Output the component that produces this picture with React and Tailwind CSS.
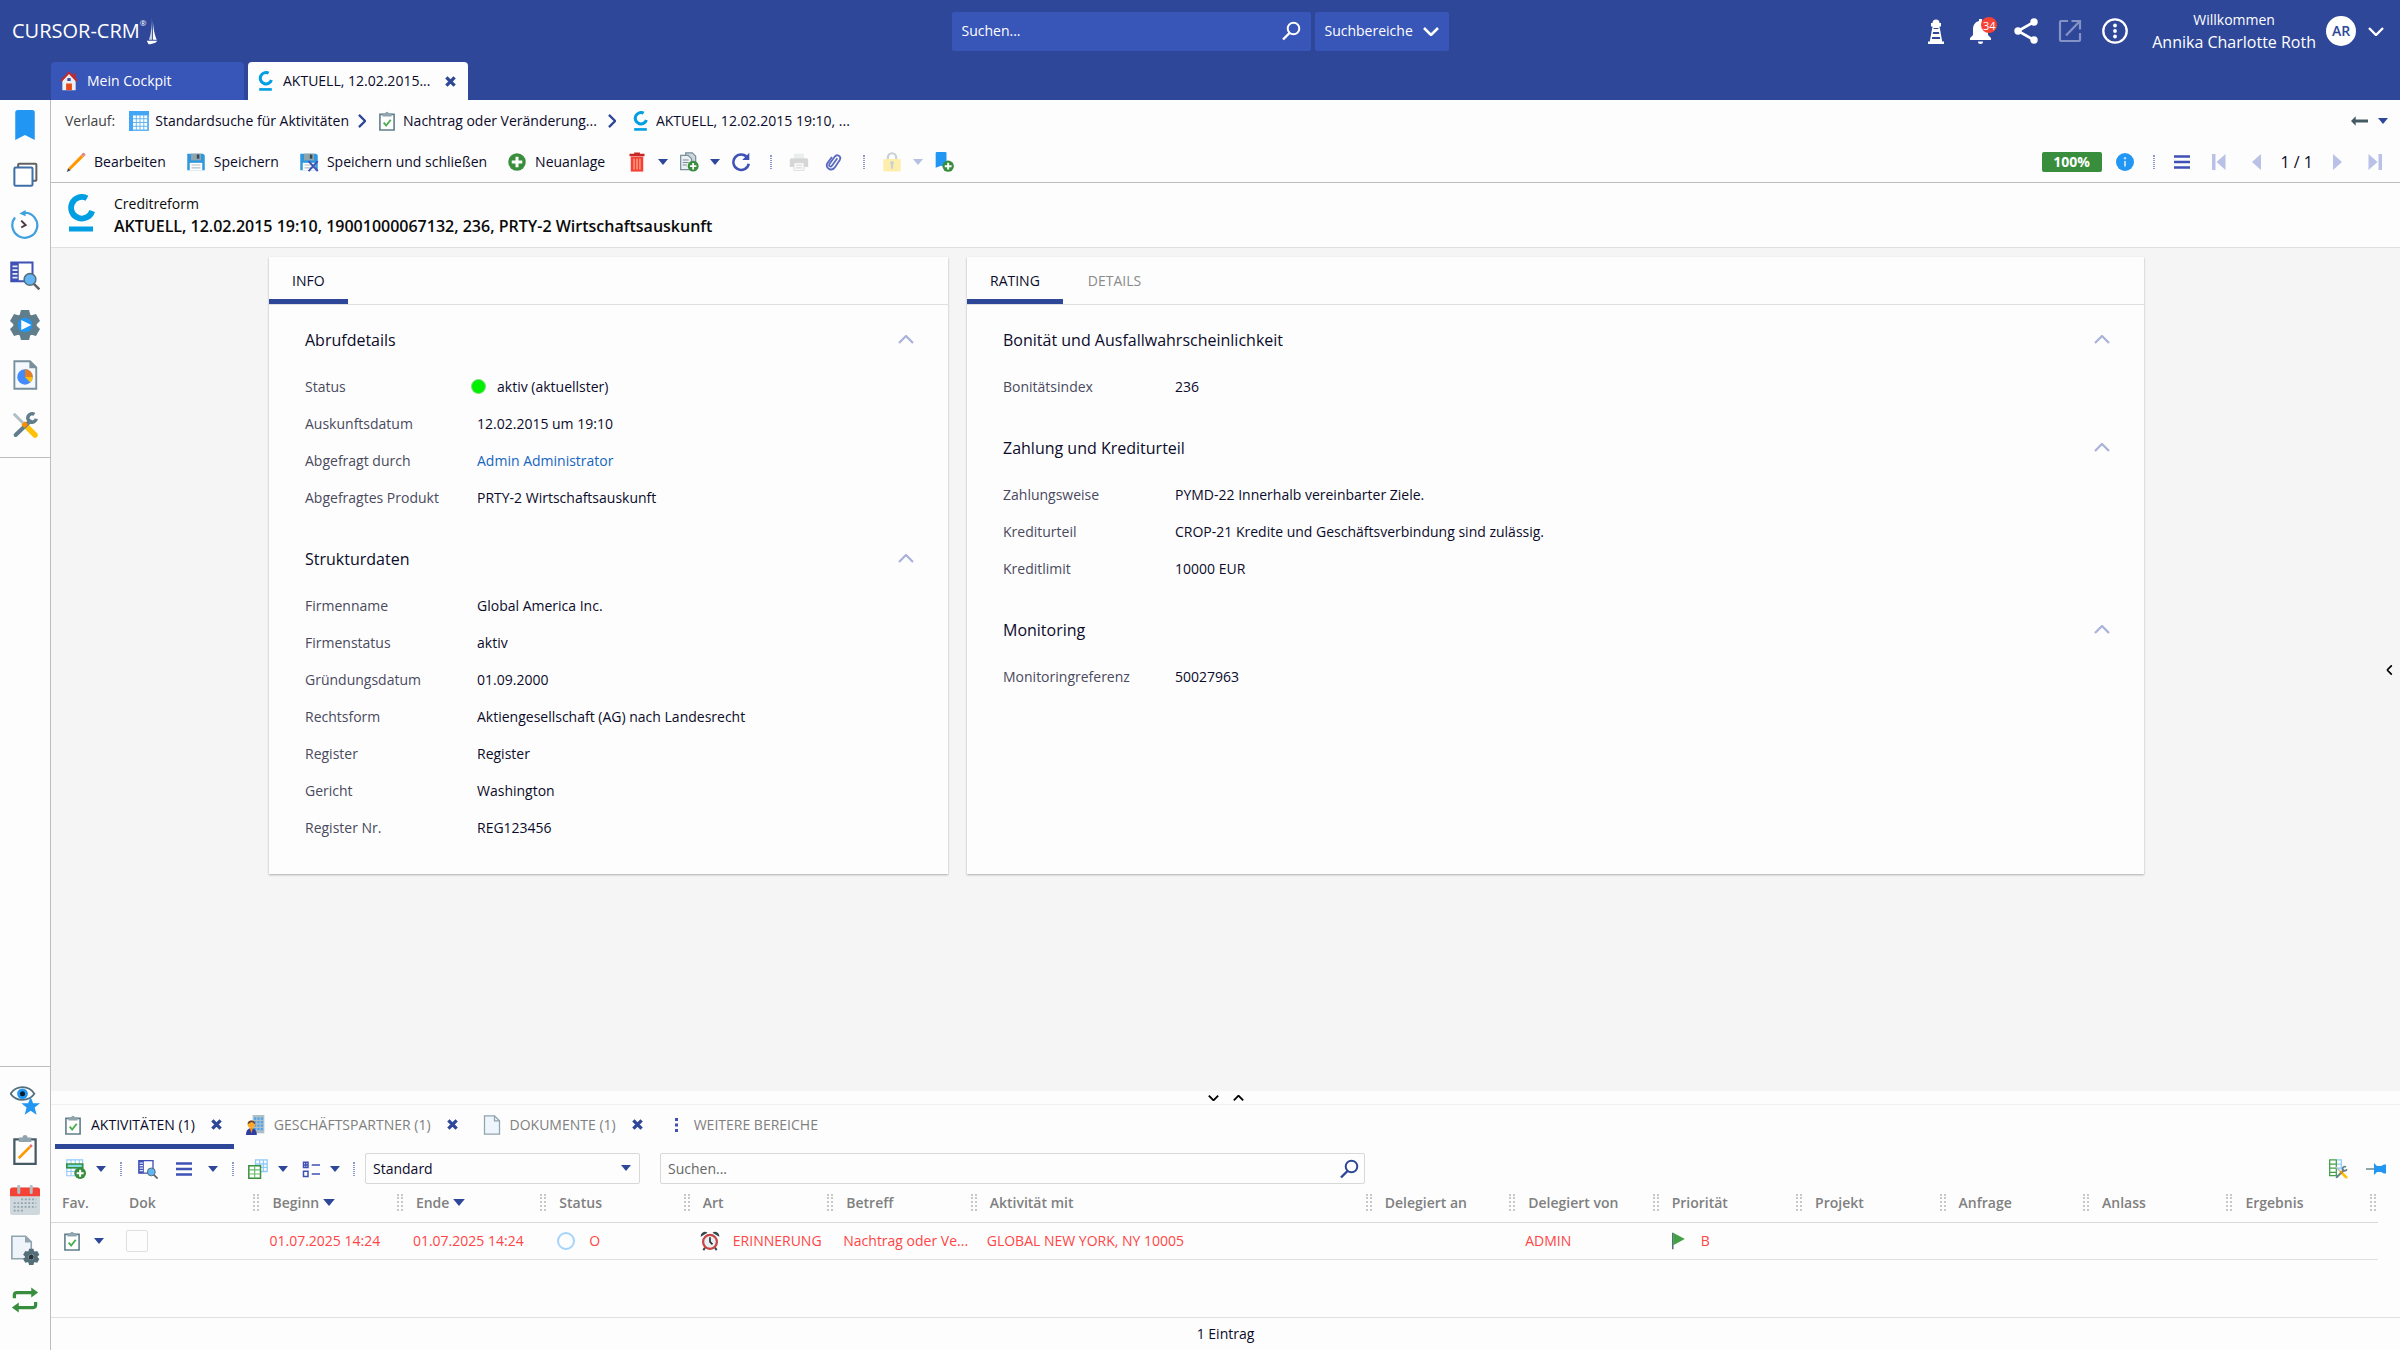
import React from "react";

const Svg = ({ children, className = "size-5", box = "0 0 24 24" }) => (
    <svg viewBox={box} className={`shrink-0 ${className}`} fill="none" aria-hidden="true">
        {children}
    </svg>
);

/* ---------- shared icons ---------- */

const Caret = ({ className = "h-[6px] w-[10px] text-[#2e4799]" }) => (
    <Svg box="0 0 10 6" className={className}>
        <path d="M0 0h10L5 6z" fill="currentColor" />
    </Svg>
);

const Chevron = ({ className, width = 2, d = "M1 1l7 7 7-7" }) => (
    <Svg box="0 0 16 9" className={className}>
        <path d={d} stroke="currentColor" strokeWidth={width} />
    </Svg>
);

const Up = "M1 8l7-7 7 7";

const CrossIcon = () => (
    <Svg box="0 0 12 12" className="size-[11px] text-[#2e4799]">
        <path d="M1.5 1.5l9 9M10.5 1.5l-9 9" stroke="currentColor" strokeWidth="3.6" />
    </Svg>
);

const CreditIcon = ({ className }) => (
    <Svg box="0 0 28 38" className={className}>
        <path d="M20 4.2A10.800 10.800 0 1 0 25.200 17" stroke="#009fe3" strokeWidth="5.800" />
        <path d="M2 32.500h24v5H2z" fill="#009fe3" />
    </Svg>
);

const Lens = ({ className }) => (
    <Svg box="0 0 20 20" className={className}>
        <circle cx="12.5" cy="7.5" r="5.8" stroke="currentColor" strokeWidth="2" />
        <path d="M8.5 12L2 18.5" stroke="currentColor" strokeWidth="2.4" />
    </Svg>
);

const ClipboardCheck = ({ className }) => (
    <Svg className={className}>
        <path d="M3.500 4h17v18.800h-17z" fill="#fff" stroke="#607d8b" strokeWidth="1.900" />
        <path d="M6.500 2.800h3.500a2 2 0 0 1 4 0h3.500v3.800h-11z" fill="#90a4ae" />
        <path d="M8 14l3 3.500 5.500-7" stroke="#4caf50" strokeWidth="2.300" />
    </Svg>
);

const TableSearch = ({ className }) => (
    <Svg className={className}>
        <path d="M1 2h17v15H1z" fill="#fff" stroke="#3f51b5" strokeWidth="1.6" />
        <path d="M1 2h6v15H1z" fill="#3f51b5" />
        <path d="M2 5h4M2 8h4M2 11h4M2 14h4" stroke="#e8eaf6" strokeWidth="1.4" />
        <path d="M18.5 18.5l5 5" stroke="#616161" strokeWidth="2" />
        <circle cx="16" cy="15.5" r="4.7" fill="#64b5f6" stroke="#546e7a" strokeWidth="1.2" />
    </Svg>
);

const Plus = ({ x, y, r }) => (
    <g>
        <circle cx={x} cy={y} r={r} fill="#388e3c" />
        <path d={`M${x - r * 0.6} ${y}h${r * 1.2}M${x} ${y - r * 0.6}v${r * 1.2}`} stroke="#fff" strokeWidth={r * 0.34} />
    </g>
);

const Lines = () => (
    <Svg box="0 0 16 14" className="h-[14px] w-4">
        <path d="M0 1.5h16M0 7h16M0 12.5h16" stroke="#3f51b5" strokeWidth="2.6" />
    </Svg>
);

const Wrench = () => (
    <g>
        <path d="M3 3l9 9" stroke="#b0bec5" strokeWidth="2.4" />
        <path d="M12 12l8 8" stroke="#ffc107" strokeWidth="4.4" strokeLinecap="round" />
        <path d="M4.5 20L16 9" stroke="#607d8b" strokeWidth="3.2" strokeLinecap="round" />
        <path d="M19.500 3.500a3.400 3.400 0 1 0 1.500 3.500" stroke="#607d8b" strokeWidth="2.800" />
        <path d="M10.5 10.5l2.5 2.5" stroke="#fb8c00" strokeWidth="4" />
    </g>
);

const Floppy = ({ x }) => (
    <Svg>
        <path d="M1.5 2h19l2 2v18h-21z" fill="#2f97dd" />
        <path d="M6 2h12v8H6z" fill="#90a4ae" />
        <path d="M13 3h3v5h-3z" fill="#37474f" />
        <path d="M4.5 13h15v9h-15z" fill="#fff" />
        <path d="M6.5 15.5h11M6.5 19h11" stroke="#b0bec5" strokeWidth="1.3" />
        {x && <path d="M11.5 11l11 12M22.5 11l-11 12" stroke="#3f51b5" strokeWidth="2.4" />}
    </Svg>
);

const Gear = ({ cx, cy, r, color, children }) => (
    <g transform={`translate(${cx} ${cy})`}>
        <circle r={r * 0.55} stroke={color} strokeWidth={r * 0.45} />
        {[0, 60, 120, 180, 240, 300].map((a) => (
            <path key={a} d={`M${-r * 0.27} ${-r}h${r * 0.54}l${r * 0.1} ${r * 0.4}h${-r * 0.74}z`} fill={color} transform={`rotate(${a})`} />
        ))}
        {children}
    </g>
);

const IconButton = ({ label, children, disabled }) => (
    <button type="button" aria-label={label} disabled={disabled} className="flex shrink-0 items-center justify-center">
        {children}
    </button>
);

const Sep = () => <span className="h-[14px] w-[2px] shrink-0 border-x border-dotted border-[#8c98cc]" />;

/* ---------- top bar ---------- */

const Header = () => (
    <header className="flex h-[100px] flex-col justify-between bg-[#2e4799] text-white">
        <div className="grid h-[62px] grid-cols-[1fr_auto_1fr] items-center">
            <div className="flex items-center pl-3">
                <span className="text-[20px] leading-6 font-medium">CURSOR-CRM</span>
                <span className="self-start text-[8px] leading-3">®</span>
                <Svg box="0 0 12 32" className="h-[28px] w-3">
                    <path d="M6 0v26H2.5C5 19 6 10 6 0z" fill="#fff" fillOpacity=".75" />
                    <path d="M7 4c.5 9 2 17 4.5 22H7z" fill="#fff" />
                    <path d="M0 27h12l-2 2.500-6 1.500H2z" fill="#fff" />
                </Svg>
            </div>
            <div className="flex h-[39px] gap-1">
                <div className="flex w-[359px] items-center rounded-xs bg-[#3855b8] px-2.5">
                    <input aria-label="Suchen" placeholder="Suchen..." className="min-w-0 flex-1 text-[14px] outline-none placeholder:text-white" />
                    <IconButton label="Suche starten">
                        <Lens className="size-5" />
                    </IconButton>
                </div>
                <button type="button" className="flex w-[134px] items-center justify-between rounded-xs bg-[#3855b8] px-2.5 text-[14px]">
                    Suchbereiche
                    <Chevron className="h-[9px] w-4" width={2.6} />
                </button>
            </div>
            <div className="flex items-center justify-end gap-5 pr-4">
                <span className="mr-1 flex">
                    <IconButton label="Leuchtturm">
                        <Svg box="0 0 16 25" className="h-[25px] w-4">
                            <path d="M4.5 4a3.5 3.5 0 0 1 7 0H13v3.500h-1.500V9h-7V7.500H3V4z" fill="#fff" />
                            <path d="M4.500 10h7l.5 3H4zM3.700 15h8.600l.5 3H3.200zM3 20h10l.6 2.500H16V25H0v-2.500h2.400z" fill="#fff" />
                            <path d="M5 9L2.500 23M11 9l2.500 14" stroke="#fff" strokeWidth="1.5" />
                        </Svg>
                    </IconButton>
                </span>
                <button type="button" aria-label="Benachrichtigungen" className="relative">
                    <Svg box="0 0 26 26" className="size-[26px]">
                        <path d="M11 1h3v2c4 1 6 4 6 8v6l3 3v2H2v-2l3-3v-6c0-4 2-7 6-8z" fill="#fff" />
                        <path d="M10 23.5h5a2.5 2.5 0 0 1-5 0z" fill="#fff" />
                    </Svg>
                    <span className="absolute -top-px -right-[3px] flex size-4 items-center justify-center rounded-full bg-[#f44336] text-[11px] leading-none">34</span>
                </button>
                <IconButton label="Teilen">
                    <Svg box="0 0 24 26" className="h-[26px] w-6">
                        <path d="M20 4L4 13l16 9" stroke="#fff" strokeWidth="2.6" />
                        <circle cx="20" cy="4" r="3.7" fill="#fff" />
                        <circle cx="4" cy="13" r="3.7" fill="#fff" />
                        <circle cx="20" cy="22" r="3.7" fill="#fff" />
                    </Svg>
                </IconButton>
                <IconButton label="In neuem Fenster öffnen">
                    <Svg className="size-6 text-[#8492c6]">
                        <path d="M10 2H3a1 1 0 0 0-1 1v18a1 1 0 0 0 1 1h18a1 1 0 0 0 1-1v-7M13.5 2H22v8.5M22 2L8 16.5" stroke="currentColor" strokeWidth="2.2" />
                    </Svg>
                </IconButton>
                <IconButton label="Mehr">
                    <Svg box="0 0 26 26" className="size-[26px]">
                        <circle cx="13" cy="13" r="11.7" stroke="#fff" strokeWidth="2.3" />
                        <circle cx="13" cy="7.5" r="1.9" fill="#fff" />
                        <circle cx="13" cy="13" r="1.9" fill="#fff" />
                        <circle cx="13" cy="18.5" r="1.9" fill="#fff" />
                    </Svg>
                </IconButton>
                <button type="button" className="ml-1 flex items-center gap-2.5">
                    <span className="flex flex-col items-center">
                        <span className="text-[14px] leading-[22px]">Willkommen</span>
                        <span className="text-[16px] leading-[22px]">Annika Charlotte Roth</span>
                    </span>
                    <span className="flex size-[30px] items-center justify-center rounded-full bg-white text-[14px] font-semibold text-[#2e4799]">AR</span>
                    <Chevron className="ml-0.5 h-[9px] w-4" width={2.4} />
                </button>
            </div>
        </div>
        <nav className="flex h-[38px] gap-1 pl-[51px] text-[14px]">
            <a href="#cockpit" className="flex w-[193px] items-center gap-2 rounded-t bg-[#3855b8] pl-2">
                <Svg>
                    <path d="M4 11l8-8 8 8v12H4z" fill="#eceff1" />
                    <path d="M17 3h3v5h-3z" fill="#c62828" />
                    <path d="M2.500 12L12 2 21.500 12" stroke="#c62828" strokeWidth="2.200" />
                    <path d="M8.500 15h7v8h-7z" fill="#e64a19" />
                    <path d="M10 8.500h4V12h-4z" fill="#3949ab" />
                </Svg>
                Mein Cockpit
            </a>
            <div className="flex w-[220px] items-center justify-between rounded-t bg-[#fdfdfd] pr-3 pl-2.5 text-[#0b0b2b]">
                <a href="#aktuell" className="flex items-center gap-2.5">
                    <CreditIcon className="h-[20px] w-[15px]" />
                    AKTUELL, 12.02.2015...
                </a>
                <IconButton label="Tab schließen">
                    <CrossIcon />
                </IconButton>
            </div>
        </nav>
    </header>
);

/* ---------- left rail ---------- */

const railTop = [
    ["Lesezeichen", <path d="M4.2 2a2 2 0 0 1 2-2h11.600a2 2 0 0 1 2 2v22L12 20l-7.800 4z" fill="#2196f3" />],
    [
        "Fenster",
        <g strokeWidth="1.6">
            <path d="M6.5 6V3.8a.8.8 0 0 1 .8-.8h13a.8.8 0 0 1 .8.8v12a.8.8 0 0 1-.8.8H18" stroke="#616161" />
            <rect x="3.5" y="6" width="14.5" height="14.5" rx="1" fill="#fff" stroke="#3f6fa8" />
        </g>,
    ],
    [
        "Verlauf",
        <g>
            <path d="M4 6A10 10 0 1 0 12 2.200" stroke="#3f9fe0" strokeWidth="1.800" />
            <path d="M7.500 2.800L12.500 0v5z" fill="#3f9fe0" />
            <path d="M9 8.500l3.500 3.500L9 14" stroke="#4e3a3a" strokeWidth="1.600" />
        </g>,
    ],
    ["Suche", <TableSearch className="size-6" />],
    [
        "Prozesse",
        <Gear cx={12} cy={12} r={12} color="#607d8b">
            <circle r="5.8" fill="#2196f3" />
            <path d="M-3-4L5 0l-8 4z" fill="#fff" />
        </Gear>,
    ],
    [
        "Berichte",
        <g>
            <path d="M3.5 1H16l5 5v17H3.5z" fill="#f5f8fc" stroke="#78909c" strokeWidth="1.5" />
            <path d="M15.5 1L21 6.5h-5.5z" fill="#78909c" />
            <circle cx="12" cy="13.5" r="6.2" fill="#448aff" />
            <path d="M12 13.5V7.3a6.2 6.2 0 0 1 6.2 6.2z" fill="#e67e22" />
            <path d="M12 13.5h6.2a6 6 0 0 1-2 4.4z" fill="#ffc107" />
        </g>,
    ],
    ["Werkzeuge", <Wrench />],
];

const railBottom = [
    [
        "Beobachten",
        <g>
            <path d="M.5 7C5 0 15 0 19.5 7 15 13.5 5 13.5.5 7z" fill="#fff" stroke="#546e7a" strokeWidth="1.4" />
            <circle cx="10" cy="7" r="4.3" fill="#2196f3" />
            <circle cx="10" cy="7" r="2" fill="#0d1b2a" />
            <path d="M16.5 9.5l2 5H24l-4.300 3.500 1.600 5.800-4.800-3.300-4.800 3.300 1.600-5.800L9 14.500h5.500z" fill="#2196f3" />
        </g>,
    ],
    [
        "Aufgaben",
        <g>
            <path d="M3.5 3.5h17V23h-17z" fill="#fff" stroke="#455a64" strokeWidth="1.8" />
            <path d="M7 2h3a2 2 0 0 1 4 0h3v3.5H7z" fill="#90a4ae" />
            <path d="M7 18.5L16 9.500" stroke="#ff9800" strokeWidth="2.200" />
            <path d="M16 9.500l1.500-1.500" stroke="#e57373" strokeWidth="2.200" />
        </g>,
    ],
    [
        "Kalender",
        <g>
            <rect x="0" y="2" width="24" height="22" rx="2" fill="#cfd8dc" />
            <path d="M0 9V4a2 2 0 0 1 2-2h20a2 2 0 0 1 2 2v5z" fill="#f44336" />
            <path d="M7 1v5M17 1v5" stroke="#b0bec5" strokeWidth="2.4" strokeLinecap="round" />
            <path d="M9 11.5h12M3 14.5h18M3 17.5h18M3 20.5h8" stroke="#90a4ae" strokeWidth="1.5" strokeDasharray="1.5 1.4" />
        </g>,
    ],
    [
        "Dokument",
        <g>
            <path d="M1.5 1h11L17 5.500V19H1.500z" fill="#eff3fa" stroke="#90a4ae" strokeWidth="1.3" />
            <path d="M12 1l5 5h-5z" fill="#90a4ae" />
            <Gear cx={17} cy={17.5} r={6.5} color="#546e7a">
                <circle r="2" fill="#263238" />
            </Gear>
        </g>,
    ],
    [
        "Synchronisieren",
        <g stroke="#388e3c" strokeWidth="2.6">
            <path d="M3.5 10.5V8q0-2 2-2H18M20.5 13.5V16q0 2-2 2H6" />
            <path d="M17 2l5.500 4-5.500 4zM7 14l-5.500 4L7 22z" fill="#388e3c" stroke="none" />
        </g>,
    ],
];

const RailGroup = ({ items, className }) => (
    <div className={`flex flex-col items-center border-[#bdbdbd] ${className}`}>
        {items.map(([label, icon]) => (
            <button key={label} type="button" aria-label={label} className="flex h-[50px] items-center">
                <Svg className="size-[30px]">{icon}</Svg>
            </button>
        ))}
    </div>
);

const Rail = () => (
    <aside className="flex w-[51px] shrink-0 flex-col justify-between border-r border-[#bdbdbd]">
        <RailGroup items={railTop} className="border-b pb-[7px]" />
        <RailGroup items={railBottom} className="border-t pt-2 pb-[25px]" />
    </aside>
);

/* ---------- breadcrumb and toolbar ---------- */

const Crumbs = () => (
    <div className="flex h-[42px] items-center justify-between pr-3 pl-3.5">
        <nav className="flex items-center text-[#0b0b2b]">
            <span className="text-[#424242]">Verlauf:</span>
            <a href="#suche" className="ml-3.5 flex items-center gap-1.5">
                <Svg>
                    <path d="M0 0h24v24H0z" fill="#64b5f6" />
                    <path d="M0 0h24v5H0zM0 0h5v24H0z" fill="#42a5f5" />
                    <path d="M6.5 5.5v17M11 5.5v17M15.5 5.5v17M20 5.5v17" stroke="#fff" strokeWidth="3.3" strokeDasharray="3.3 1.2" />
                </Svg>
                Standardsuche für Aktivitäten
            </a>
            <Chevron className="mx-1.5 h-[8px] w-3.5 -rotate-90 text-[#2e4799]" width={2.600} />
            <a href="#nachtrag" className="ml-0.5 flex items-center gap-1.5">
                <ClipboardCheck className="size-5" />
                Nachtrag oder Veränderung...
            </a>
            <Chevron className="mx-2 h-[8px] w-3.5 -rotate-90 text-[#2e4799]" width={2.600} />
            <a href="#aktuell" className="ml-1.5 flex items-center gap-2">
                <CreditIcon className="h-[20px] w-[15px]" />
                AKTUELL, 12.02.2015 19:10, ...
            </a>
        </nav>
        <div className="flex items-center gap-2.5">
            <IconButton label="Zurück">
                <Svg box="0 0 18 10" className="h-[10px] w-[17px]">
                    <path d="M0 5l5-5v3.500h13v3H5V10z" fill="#455a64" />
                </Svg>
            </IconButton>
            <IconButton label="Verlauf öffnen">
                <Caret />
            </IconButton>
        </div>
    </div>
);

const ToolButton = ({ icon, children }) => (
    <button type="button" className="flex items-center gap-2 text-[#0b0b2b]">
        {icon}
        {children}
    </button>
);

const Toolbar = () => (
    <div className="flex h-[41px] items-center justify-between border-b border-[#bdbdbd] pr-[18px] pb-px pl-[15px]">
        <div className="flex items-center gap-[11px]">
            <div className="mr-[11px] flex items-center gap-5">
                <ToolButton
                    icon={
                        <Svg>
                            <path d="M2.5 19.500L18 3.500l2.800 2.800L5 22z" fill="#ff9800" />
                            <path d="M2.5 19.500L1 24l4.500-2z" fill="#37474f" />
                            <path d="M18 3.500l2-2.200a2.200 2.200 0 0 1 3 3L20.800 6.300z" fill="#e08a8a" />
                        </Svg>
                    }
                >
                    Bearbeiten
                </ToolButton>
                <ToolButton icon={<Floppy />}>Speichern</ToolButton>
                <ToolButton icon={<Floppy x />}>Speichern und schließen</ToolButton>
                <ToolButton icon={<Svg><Plus x={12} y={12} r={10.5} /></Svg>}>Neuanlage</ToolButton>
            </div>
            <IconButton label="Löschen">
                <Svg>
                    <path d="M3 2h5.5V.5h7V2H21v3H3z" fill="#c62828" />
                    <path d="M4.5 5.500h15v18h-15z" fill="#f44336" />
                    <path d="M8.500 8v13M12 8v13M15.500 8v13" stroke="#ffab91" strokeWidth="1.500" />
                </Svg>
            </IconButton>
            <IconButton label="Löschoptionen"><Caret /></IconButton>
            <IconButton label="Kopieren">
                <Svg>
                    <path d="M8 1h8l4 4v14H8z" fill="#cfd8dc" stroke="#78909c" strokeWidth="1.5" />
                    <path d="M2 4h9l4 4v13H2z" fill="#eceff1" stroke="#78909c" strokeWidth="1.5" />
                    <path d="M4.500 9.500h7M4.500 12.500h7M4.500 15.500h5" stroke="#78909c" strokeWidth="1.300" />
                    <Plus x={17} y={17} r={6.5} />
                </Svg>
            </IconButton>
            <IconButton label="Kopieroptionen"><Caret /></IconButton>
            <IconButton label="Aktualisieren">
                <Svg>
                    <path d="M19.500 6.500A9.300 9.300 0 1 0 21.300 14" stroke="#3f51b5" strokeWidth="3" />
                    <path d="M13.500 9.500h8.500V1z" fill="#3f51b5" />
                </Svg>
            </IconButton>
            <span className="mr-1.5 ml-2 flex"><Sep /></span>
            <IconButton label="Drucken" disabled>
                <Svg className="size-5 opacity-40">
                    <path d="M6 2h12v6H6z" fill="#cfd8dc" />
                    <path d="M3 7.500h18a2 2 0 0 1 2 2V18H1V9.500a2 2 0 0 1 2-2z" fill="#9e9e9e" />
                    <path d="M6 13h12v9H6z" fill="#fff" stroke="#9e9e9e" />
                    <path d="M8 16h8M8 19h8" stroke="#9e9e9e" strokeWidth="1.3" />
                </Svg>
            </IconButton>
            <span className="ml-1 flex">
                <IconButton label="Anhang">
                    <Svg>
                        <path d="M16 7.500L9.500 16.500q-1.200 1.600-2.600.7t-.4-2.700L13 5.500q2-2.600 4.800-.9t1.300 4.600L13 18.500q-3 4-7 1.700T4 13.500L9.500 6" stroke="#5c6bc0" strokeWidth="2.200" />
                    </Svg>
                </IconButton>
            </span>
            <span className="mr-1.5 ml-2 flex"><Sep /></span>
            <IconButton label="Sperren" disabled>
                <Svg className="size-5 opacity-40">
                    <path d="M7 9V6.5a5 5 0 0 1 10 0V9" stroke="#78909c" strokeWidth="2.6" />
                    <rect x="1.5" y="8.5" width="21" height="15" rx="1.5" fill="#fdd835" />
                    <path d="M12 13v7" stroke="#78909c" strokeWidth="2.6" />
                    <circle cx="12" cy="13" r="2.2" fill="#78909c" />
                </Svg>
            </IconButton>
            <IconButton label="Sperroptionen" disabled><Caret className="h-[6px] w-[10px] text-[#b7c0e0]" /></IconButton>
            <IconButton label="Lesezeichen hinzufügen">
                <Svg>
                    <path d="M2 1.500A1.500 1.500 0 0 1 3.500 0h10A1.500 1.500 0 0 1 15 1.500V18l-6.500-1.500L2 19z" fill="#2196f3" />
                    <Plus x={17} y={17} r={6.800} />
                </Svg>
            </IconButton>
        </div>
        <div className="flex items-center">
            <span className="flex h-5 w-[60px] items-center justify-center rounded-xs bg-[#388e3c] font-bold text-white">100%</span>
            <span className="mr-[19px] ml-3.5 flex">
                <IconButton label="Information">
                    <Svg className="size-[18px]">
                        <circle cx="12" cy="12" r="12" fill="#2196f3" />
                        <path d="M12 10.5V18" stroke="#bbdefb" strokeWidth="2.6" />
                        <circle cx="12" cy="7" r="1.6" fill="#bbdefb" />
                    </Svg>
                </IconButton>
            </span>
            <Sep />
            <span className="mr-[22px] ml-[19px] flex">
                <IconButton label="Menü"><Lines /></IconButton>
            </span>
            <div className="flex items-center gap-[22px] text-[#b9c1e6]">
                <IconButton label="Erster Eintrag" disabled>
                    <Svg box="0 0 14 16" className="h-4 w-3.5"><path d="M0 0h3.500v16H0zM13.500 0v16L4.500 8z" fill="currentColor" /></Svg>
                </IconButton>
                <IconButton label="Voriger Eintrag" disabled>
                    <Svg box="0 0 14 16" className="h-4 w-3.5"><path d="M13 0v16L4 8z" fill="currentColor" /></Svg>
                </IconButton>
                <span className="-mx-[3px] text-[16px] whitespace-pre text-[#0b0b2b]">1 / 1</span>
                <IconButton label="Nächster Eintrag" disabled>
                    <Svg box="0 0 14 16" className="h-4 w-3.5"><path d="M1 0v16l9-8z" fill="currentColor" /></Svg>
                </IconButton>
                <IconButton label="Letzter Eintrag" disabled>
                    <Svg box="0 0 14 16" className="h-4 w-3.5"><path d="M10.500 0H14v16h-3.500zM.5 0v16l9-8z" fill="currentColor" /></Svg>
                </IconButton>
            </div>
        </div>
    </div>
);

/* ---------- record cards ---------- */

const infoSections = [
    {
        title: "Abrufdetails",
        rows: [
            ["Status", <span className="-ml-[6px] flex items-center gap-[11px]"><i className="size-[15px] rounded-full border border-[#7fdc7f] bg-[#00f000]" />aktiv (aktuellster)</span>],
            ["Auskunftsdatum", "12.02.2015 um 19:10"],
            ["Abgefragt durch", <a href="#admin" className="text-[#1565c0]">Admin Administrator</a>],
            ["Abgefragtes Produkt", "PRTY-2 Wirtschaftsauskunft"],
        ],
    },
    {
        title: "Strukturdaten",
        rows: [
            ["Firmenname", "Global America Inc."],
            ["Firmenstatus", "aktiv"],
            ["Gründungsdatum", "01.09.2000"],
            ["Rechtsform", "Aktiengesellschaft (AG) nach Landesrecht"],
            ["Register", "Register"],
            ["Gericht", "Washington"],
            ["Register Nr.", "REG123456"],
        ],
    },
];

const ratingSections = [
    { title: "Bonität und Ausfallwahrscheinlichkeit", rows: [["Bonitätsindex", "236"]] },
    {
        title: "Zahlung und Krediturteil",
        rows: [
            ["Zahlungsweise", "PYMD-22 Innerhalb vereinbarter Ziele."],
            ["Krediturteil", "CROP-21 Kredite und Geschäftsverbindung sind zulässig."],
            ["Kreditlimit", "10000 EUR"],
        ],
    },
    { title: "Monitoring", rows: [["Monitoringreferenz", "50027963"]] },
];

const Card = ({ tabs, sections }) => (
    <section className="bg-[#fdfdfd] pb-3.5 shadow-[0_1px_2px_rgba(0,0,0,0.3)]">
        <div className="flex h-[48px] border-b border-[#e0e0e0]">
            {tabs.map((t, i) => (
                <button
                    key={t}
                    type="button"
                    className={i === 0 ? "border-b-5 border-[#2e4799] px-[23px] pt-1.5 text-[#0b0b2b]" : "border-b-5 border-transparent px-[25px] pt-1.5 text-[#8a8a8a]"}
                >
                    {t}
                </button>
            ))}
        </div>
        <div className="pt-1.5 pr-[34px] pl-9">
            {sections.map((s) => (
                <div key={s.title} className="mb-3.5">
                    <h2 className="flex h-[57px] items-center justify-between text-[16px] text-[#0b0b2b]">
                        {s.title}
                        <IconButton label={`${s.title} einklappen`}>
                            <Chevron d={Up} width={2.2} className="h-[9px] w-4 text-[#a9b3d9]" />
                        </IconButton>
                    </h2>
                    <dl>
                        {s.rows.map(([label, value]) => (
                            <div key={label} className="flex h-[37px] items-center">
                                <dt className="w-[172px] shrink-0 text-[#4a4a5e]">{label}</dt>
                                <dd className="text-[#0b0b2b]">{value}</dd>
                            </div>
                        ))}
                    </dl>
                </div>
            ))}
        </div>
    </section>
);

const Record = () => (
    <>
        <div className="flex h-[65px] items-center gap-[19px] border-b border-[#e0e0e0] pl-4">
            <CreditIcon className="mb-1 h-[38px] w-7" />
            <div className="text-[#0b0b0b]">
                <p className="leading-[22px]">Creditreform</p>
                <h1 className="text-[16px] leading-[22px] font-semibold">AKTUELL, 12.02.2015 19:10, 19001000067132, 236, PRTY-2 Wirtschaftsauskunft</h1>
            </div>
        </div>
        <div className="flex flex-1 bg-[#f5f5f5]">
            <div className="flex-1 pt-[9px]">
                <div className="mx-auto grid max-w-[1875px] grid-cols-[679fr_1177fr] gap-[19px]">
                    <Card tabs={["INFO"]} sections={infoSections} />
                    <Card tabs={["RATING", "DETAILS"]} sections={ratingSections} />
                </div>
            </div>
            <div className="flex w-[38px] items-center justify-center pl-4">
                <IconButton label="Seitenleiste öffnen">
                    <Chevron className="h-[6px] w-[11px] rotate-90" width={2.6} />
                </IconButton>
            </div>
        </div>
    </>
);

/* ---------- activity panel ---------- */

const PanelTab = ({ icon, children, active }) => (
    <div className={`flex h-[44px] items-center gap-4 border-b-5 pr-3 ${active ? "border-[#2e4799] pl-2 text-[#0b0b2b]" : "border-transparent pl-3 text-[#808080]"}`}>
        <button type="button" className="flex items-center gap-2">
            {icon}
            {children}
        </button>
        <IconButton label="Bereich schließen">
            <CrossIcon />
        </IconButton>
    </div>
);

const columns = [
    ["Fav."], ["Dok"], ["Beginn", true], ["Ende", true], ["Status"], ["Art"], ["Betreff"], ["Aktivität mit"],
    ["Delegiert an"], ["Delegiert von"], ["Priorität"], ["Projekt"], ["Anfrage"], ["Anlass"], ["Ergebnis"],
];

const ActivityTable = () => (
    <table className="w-full table-fixed border-collapse text-left">
        <thead>
            <tr className="h-[38px] border-b border-[#d8d8d8]">
                {columns.map(([name, sorted], i) => (
                    <th key={name} className={`p-0 pl-[11px] font-semibold text-[#808080] ${i === 0 ? "w-[67px]" : i === 7 ? "w-[395px]" : ""}`}>
                        <div className="flex items-center justify-between pr-0.5">
                            <span className="flex items-center gap-1">
                                {name}
                                {sorted && <Caret className="h-[7px] w-3 text-[#2e4799]" />}
                            </span>
                            {i > 0 && <i className="h-[17px] w-[6px] border-x-2 border-dotted border-[#c8c8c8]" />}
                        </div>
                    </th>
                ))}
            </tr>
        </thead>
        <tbody>
            <tr className="h-[37px] border-b border-[#e0e0e0] whitespace-nowrap text-[#ff4545] *:p-0 *:pl-2">
                <td>
                    <span className="flex items-center gap-3 pl-[3px]">
                        <ClipboardCheck className="size-5" />
                        <IconButton label="Zeilenoptionen"><Caret /></IconButton>
                    </span>
                </td>
                <td>
                    <input type="checkbox" aria-label="Dokument vorhanden" className="block size-[22px] appearance-none rounded-xs border border-[#e0e0e0]" />
                </td>
                <td>01.07.2025 14:24</td>
                <td>01.07.2025 14:24</td>
                <td>
                    <span className="flex items-center gap-3.5 pl-px">
                        <i className="size-[18px] rounded-full border-2 border-[#a6d3fa]" />O
                    </span>
                </td>
                <td>
                    <span className="flex items-center gap-[13px]">
                        <Svg>
                            <path d="M6 20l-2 3M18 20l2 3" stroke="#37474f" strokeWidth="2.4" />
                            <path d="M1 7a5 5 0 0 1 8-5zM23 7a5 5 0 0 0-8-5z" fill="#37474f" />
                            <circle cx="12" cy="13" r="8.3" fill="#eceff1" stroke="#c64545" strokeWidth="2.7" />
                            <path d="M12 7.5V13l3 3" stroke="#263238" strokeWidth="2" />
                        </Svg>
                        ERINNERUNG
                    </span>
                </td>
                <td>Nachtrag oder Ve...</td>
                <td>GLOBAL NEW YORK, NY 10005</td>
                <td />
                <td>ADMIN</td>
                <td>
                    <span className="flex items-center gap-3">
                        <Svg>
                            <path d="M4.5 2v20" stroke="#546e7a" strokeWidth="1.8" />
                            <path d="M5 2l14 7.5L5 17z" fill="#43a047" />
                        </Svg>
                        B
                    </span>
                </td>
                <td />
                <td />
                <td />
                <td />
            </tr>
        </tbody>
    </table>
);

const ActivityPanel = () => (
    <section className="flex flex-col">
        <div className="flex h-[14px] items-center justify-center gap-3.5 border-b border-[#f0f0f0] text-black">
            <IconButton label="Bereich verkleinern"><Chevron className="h-[6px] w-[11px]" width={2.8} /></IconButton>
            <IconButton label="Bereich vergrößern"><Chevron className="h-[6px] w-[11px]" width={2.8} d={Up} /></IconButton>
        </div>
        <div className="flex pl-1">
            <PanelTab active icon={<ClipboardCheck className="size-5" />}>AKTIVITÄTEN (1)</PanelTab>
            <PanelTab
                icon={
                    <Svg>
                        <path d="M8 0h14v22H8z" fill="#b0bec5" />
                        <path d="M11 3v16M15 3v16M19 3v16" stroke="#42a5f5" strokeWidth="2.6" strokeDasharray="2.800 1.400" />
                        <path d="M0 24c0-6 3-8 6.500-8s6.500 2 6.500 8z" fill="#303f9f" />
                        <path d="M4.5 15h4l-2 7z" fill="#ff9800" />
                        <circle cx="6.5" cy="11" r="4.5" fill="#ffa726" />
                        <path d="M2 11c-.5-6 9.500-6 9 0-2-1-3-2.500-4-2.500S4 10 2 11z" fill="#5d4037" />
                    </Svg>
                }
            >
                GESCHÄFTSPARTNER (1)
            </PanelTab>
            <PanelTab
                icon={
                    <Svg>
                        <path d="M3 1h12l6 6v16H3z" fill="#eff5fc" stroke="#90a4ae" strokeWidth="1.5" />
                        <path d="M15 1v6h6" stroke="#90a4ae" strokeWidth="1.5" />
                    </Svg>
                }
            >
                DOKUMENTE (1)
            </PanelTab>
            <button type="button" className="flex h-[39px] items-center gap-[15px] pl-5 text-[#808080]">
                <Svg box="0 0 4 16" className="h-4 w-1">
                    <path d="M0 1h3v3H0zM0 6.500h3v3H0zM0 12h3v3H0z" fill="#3f51b5" />
                </Svg>
                WEITERE BEREICHE
            </button>
        </div>
        <div className="mt-1 flex h-[31px] items-center justify-between pr-3.5 pl-[15px]">
            <div className="flex items-center gap-2.5">
                <IconButton label="Neuer Eintrag">
                    <Svg>
                        <path d="M1 1h19v19H1z" fill="#fff" stroke="#90caf9" strokeWidth="1.3" />
                        <path d="M6 1v19M11 1v19M16 1v19M1 15h19M1 11h19" stroke="#90caf9" strokeWidth="1.2" />
                        <path d="M1 6h19v4.5H1z" fill="#80deea" stroke="#388e3c" strokeWidth="2" />
                        <Plus x={17} y={17} r={7} />
                    </Svg>
                </IconButton>
                <IconButton label="Eintragsoptionen"><Caret /></IconButton>
                <span className="mr-1.5 ml-1 flex"><Sep /></span>
                <IconButton label="Tabelle durchsuchen"><TableSearch className="size-5" /></IconButton>
                <span className="mr-1.5 ml-2 flex"><IconButton label="Ansicht"><Lines /></IconButton></span>
                <IconButton label="Ansichtsoptionen"><Caret /></IconButton>
                <span className="mx-1 flex"><Sep /></span>
                <IconButton label="Tabellen kopieren">
                    <Svg>
                        <path d="M9 1h14v14H9zM9 6h14M9 10h14M14 1v14M18.5 1v14" stroke="#90caf9" strokeWidth="1.6" />
                        <path d="M1 8h14v15H1z" fill="#fff" stroke="#388e3c" strokeWidth="1.8" />
                        <path d="M1 13h14M1 18h14M8 8v15" stroke="#66bb6a" strokeWidth="1.4" />
                    </Svg>
                </IconButton>
                <IconButton label="Kopieroptionen"><Caret /></IconButton>
                <IconButton label="Gruppierung">
                    <Svg className="ml-1 size-[18px]">
                        <path d="M2 3h6v7H2zM2 15h6v7H2z" stroke="#3f51b5" strokeWidth="2" />
                        <path d="M5 4v5M2 6.5h6M13 6.5h11M13 18.5h11" stroke="#3f51b5" strokeWidth="2" />
                    </Svg>
                </IconButton>
                <IconButton label="Gruppierungsoptionen"><Caret /></IconButton>
                <span className="ml-[3px] flex"><Sep /></span>
                <div className="relative w-[275px]">
                    <select aria-label="Ansicht wählen" className="h-[31px] w-full appearance-none rounded-xs border border-[#d8d8d8] pl-[7px] text-[#0b0b2b]">
                        <option>Standard</option>
                    </select>
                    <span className="pointer-events-none absolute top-3 right-[9px]"><Caret /></span>
                </div>
                <div className="ml-2.5 flex h-[31px] w-[705px] items-center rounded-xs border border-[#d8d8d8] pr-[5px] pl-[7px]">
                    <input aria-label="Aktivitäten suchen" placeholder="Suchen..." className="min-w-0 flex-1 outline-none placeholder:text-[#666]" />
                    <IconButton label="Suchen">
                        <Lens className="size-5 text-[#2e4799]" />
                    </IconButton>
                </div>
            </div>
            <div className="flex items-center gap-[18px]">
                <IconButton label="Tabelle konfigurieren">
                    <Svg>
                        <path d="M2 1h8v19H2zM2 6h8M2 11h8M2 16h8" stroke="#43a047" strokeWidth="1.5" />
                        <path d="M11 1h5v12M11 6h5M11 11h5" stroke="#90caf9" strokeWidth="1.5" />
                        <g transform="translate(7 7) scale(.74)"><Wrench /></g>
                    </Svg>
                </IconButton>
                <IconButton label="Anheften">
                    <Svg box="0 0 20 12" className="h-3 w-5">
                        <path d="M0 6h8" stroke="#90a4ae" strokeWidth="2" />
                        <path d="M8 0l3 3h4l3-1.500h2v9h-2L15 9h-4l-3 3z" fill="#2196f3" />
                    </Svg>
                </IconButton>
            </div>
        </div>
        <div className="h-[133px] pr-[22px]">
            <ActivityTable />
        </div>
        <footer className="flex h-[33px] items-center justify-center border-t border-[#e0e0e0] text-[#0b0b2b]">1 Eintrag</footer>
    </section>
);

export default function App() {
    return (
        <div className="flex min-h-screen flex-col bg-[#fdfdfd] font-['Segoe_UI','Open_Sans','Noto_Sans',sans-serif] text-[14px] leading-5">
            <Header />
            <div className="flex flex-1">
                <Rail />
                <main className="flex min-w-0 flex-1 flex-col">
                    <Crumbs />
                    <Toolbar />
                    <Record />
                    <ActivityPanel />
                </main>
            </div>
        </div>
    );
}
